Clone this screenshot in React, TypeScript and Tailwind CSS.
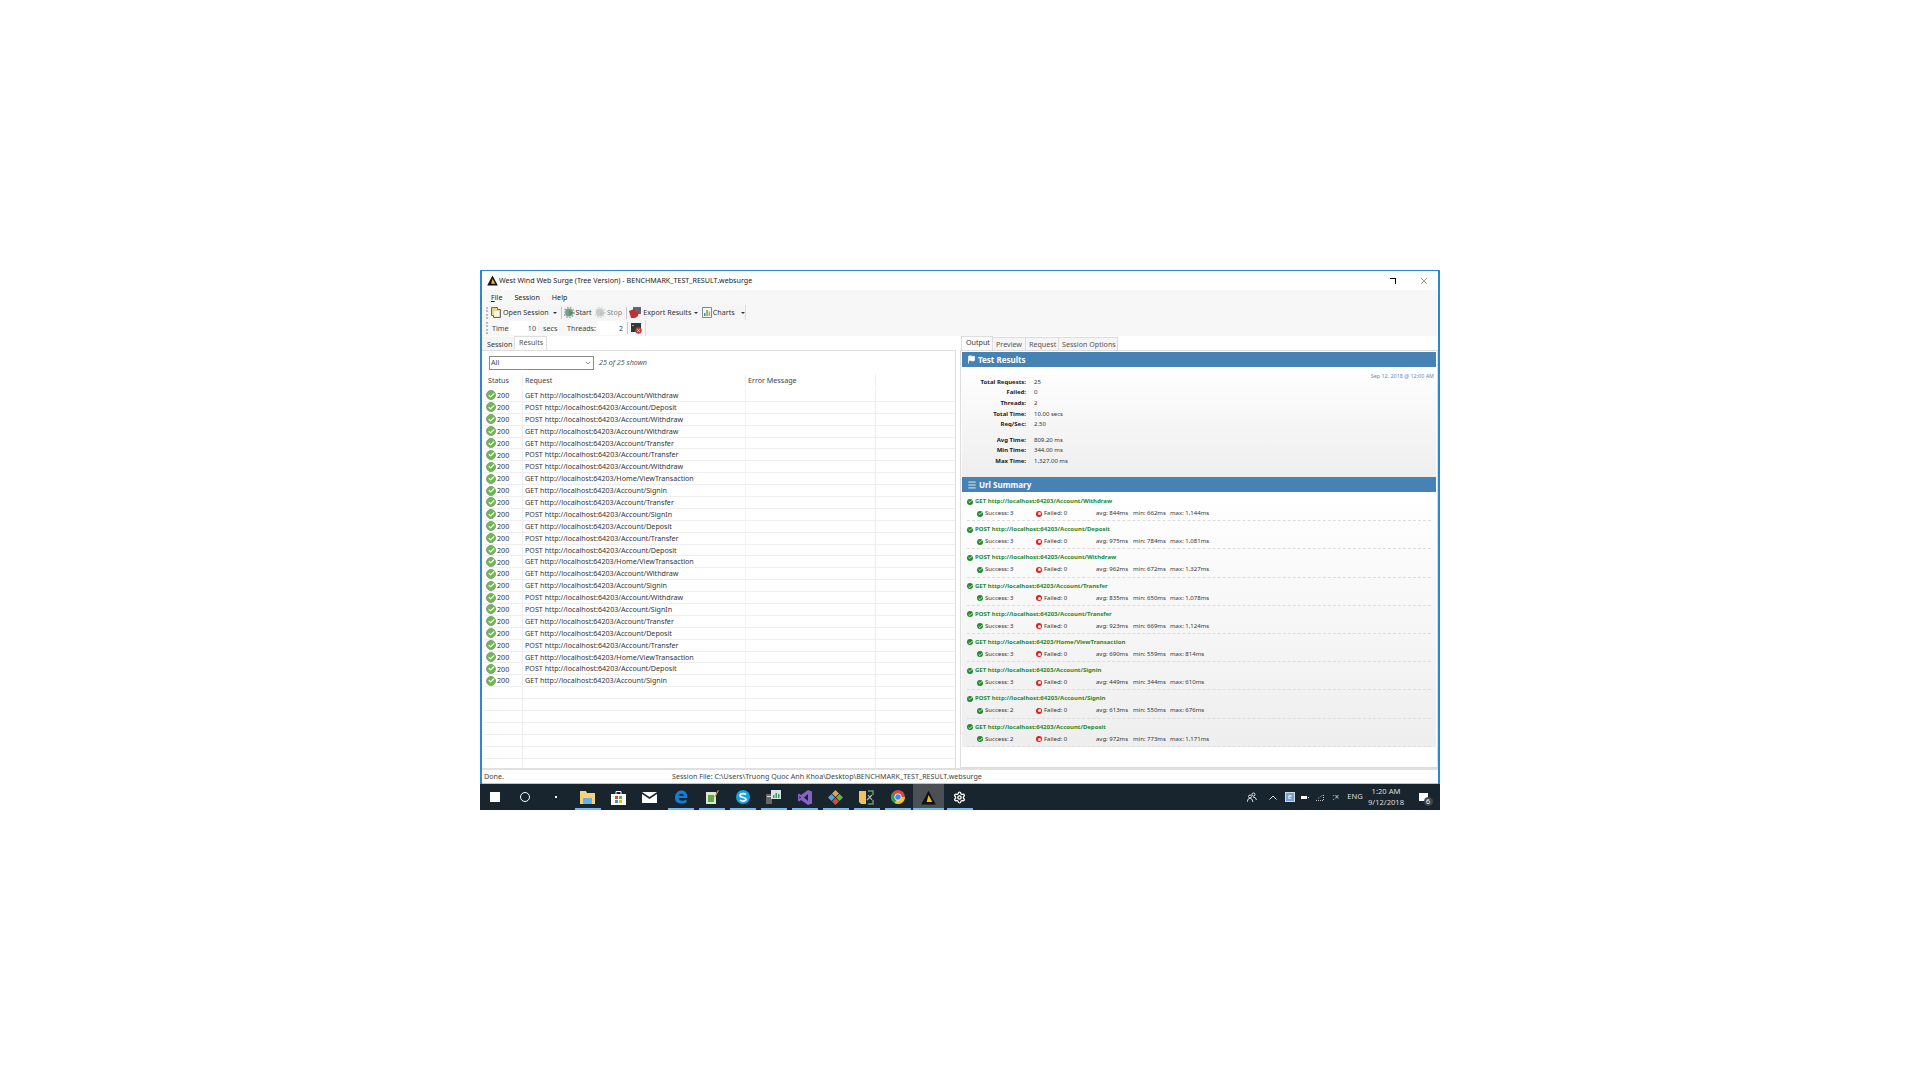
import type { ReactNode } from 'react';
import { Check, X, ChevronDown, Settings, Flag, Menu } from 'lucide-react';

const requests = [
    'GET http://localhost:64203/Account/Withdraw',
    'POST http://localhost:64203/Account/Deposit',
    'POST http://localhost:64203/Account/Withdraw',
    'GET http://localhost:64203/Account/Withdraw',
    'GET http://localhost:64203/Account/Transfer',
    'POST http://localhost:64203/Account/Transfer',
    'POST http://localhost:64203/Account/Withdraw',
    'GET http://localhost:64203/Home/ViewTransaction',
    'GET http://localhost:64203/Account/Signin',
    'GET http://localhost:64203/Account/Transfer',
    'POST http://localhost:64203/Account/SignIn',
    'GET http://localhost:64203/Account/Deposit',
    'POST http://localhost:64203/Account/Transfer',
    'POST http://localhost:64203/Account/Deposit',
    'GET http://localhost:64203/Home/ViewTransaction',
    'GET http://localhost:64203/Account/Withdraw',
    'GET http://localhost:64203/Account/Signin',
    'POST http://localhost:64203/Account/Withdraw',
    'POST http://localhost:64203/Account/SignIn',
    'GET http://localhost:64203/Account/Transfer',
    'GET http://localhost:64203/Account/Deposit',
    'POST http://localhost:64203/Account/Transfer',
    'GET http://localhost:64203/Home/ViewTransaction',
    'POST http://localhost:64203/Account/Deposit',
    'GET http://localhost:64203/Account/Signin',
];

const urls = [
    { url: 'GET http://localhost:64203/Account/Withdraw', ok: 3, avg: 844, min: 662, max: '1,144' },
    { url: 'POST http://localhost:64203/Account/Deposit', ok: 3, avg: 975, min: 784, max: '1,081' },
    { url: 'POST http://localhost:64203/Account/Withdraw', ok: 3, avg: 962, min: 672, max: '1,327' },
    { url: 'GET http://localhost:64203/Account/Transfer', ok: 3, avg: 835, min: 650, max: '1,078' },
    { url: 'POST http://localhost:64203/Account/Transfer', ok: 3, avg: 923, min: 669, max: '1,124' },
    { url: 'GET http://localhost:64203/Home/ViewTransaction', ok: 3, avg: 690, min: 559, max: '814' },
    { url: 'GET http://localhost:64203/Account/Signin', ok: 3, avg: 449, min: 344, max: '610' },
    { url: 'POST http://localhost:64203/Account/Signin', ok: 2, avg: 613, min: 550, max: '676' },
    { url: 'GET http://localhost:64203/Account/Deposit', ok: 2, avg: 972, min: 773, max: '1,171' },
];

const stats = [
    ['Total Requests:', '25'],
    ['Failed:', '0'],
    ['Threads:', '2'],
    ['Total Time:', '10.00 secs'],
    ['Req/Sec:', '2.50'],
];

const times = [
    ['Avg Time:', '809.20 ms'],
    ['Min Time:', '344.00 ms'],
    ['Max Time:', '1,327.00 ms'],
];

function Logo({ size = 11 }: { size?: number }) {
    return (
        <svg width={size} height={size} viewBox="0 0 12 12">
            <path d="M6 .5 11.800 11.500H.2Z" fill="#111" />
            <path d="M6 4 9 9.500H4.500Z" fill="#f2c200" />
        </svg>
    );
}

function RowCheck() {
    return (
        <span className="w-[10px] h-[10px] rounded-full bg-[#6dbb4a] border border-[#8a9a86] flex items-center justify-center shrink-0">
            <Check size={7} strokeWidth={4} color="#fff" />
        </span>
    );
}

function SmallCheck() {
    return (
        <span className="w-[6px] h-[6px] rounded-full bg-[#1f8a2e] flex items-center justify-center shrink-0">
            <Check size={5} strokeWidth={4} color="#fff" />
        </span>
    );
}

function SmallFail() {
    return (
        <span className="w-[6px] h-[6px] rounded-full bg-[#f01a1a] flex items-center justify-center shrink-0">
            <span className="w-[3px] h-[3px] bg-white rounded-full" />
        </span>
    );
}

function Grip() {
    return <span className="w-[2px] h-[12px] border-l-2 border-dotted border-[#bdbdbd] shrink-0" />;
}

function Caret() {
    return <span className="w-0 h-0 border-x-[2px] border-x-transparent border-t-[2px] border-t-[#333] shrink-0" />;
}

function Sep() {
    return <span className="block w-px h-[12px] bg-[#c8c8c8] shrink-0" />;
}

function OpenIcon() {
    return (
        <svg width="10" height="11" viewBox="0 0 10 11">
            <path d="M.5.5h6v2h3v8h-7v-2h-2Z" fill="#e9d48a" stroke="#6e6a55" />
            <path d="M3 4h5v5.500H3Z" fill="#f7f7f2" />
        </svg>
    );
}

function GearIcon({ grey }: { grey?: boolean }) {
    return (
        <svg width="11" height="11" viewBox="0 0 11 11">
            <circle cx="5" cy="5.500" r="4" fill={grey ? '#c9cdcb' : '#7f9a94'} />
            <circle cx="5" cy="5.500" r="5" fill="none" stroke={grey ? '#d5d8d6' : '#8ba39e'} strokeWidth="1.400" strokeDasharray="1.500 1.500" />
            <path d="M5 3.500l5 2.500-5 2.500Z" fill={grey ? '#c0c4c2' : '#3fa34a'} />
        </svg>
    );
}

function ExportIcon() {
    return (
        <svg width="12" height="11" viewBox="0 0 12 11">
            <path d="M4 0h8v7H4Z" fill="#63676b" />
            <path d="M0 4l5-2 2 3 3-1-1 5-3 2H2Z" fill="#bf2f34" />
        </svg>
    );
}

function ChartsIcon() {
    return (
        <svg width="10" height="11" viewBox="0 0 10 11">
            <path d="M.5.5h9v10h-9Z" fill="#f2f6f8" stroke="#7b8d99" />
            <path d="M2 6h1.500v3H2Z" fill="#3f8fca" />
            <path d="M4.300 3h1.500v6H4.300Z" fill="#6cab4a" />
            <path d="M6.600 4.500h1.500V9H6.600Z" fill="#e0a43c" />
        </svg>
    );
}

function ConsoleIcon() {
    return (
        <svg width="11" height="11" viewBox="0 0 11 11">
            <path d="M0 0h10v9H0Z" fill="#2e3a36" />
            <path d="M1 2h2v1H1Z" fill="#6fd06f" />
            <circle cx="7.500" cy="7.500" r="3.200" fill="#dc3430" />
            <path d="M6.300 6.300l2.400 2.400m0-2.400L6.300 8.700" stroke="#fff" strokeWidth=".8" />
        </svg>
    );
}

function TitleBar() {
    return (
        <div className="h-[19px] shrink-0 bg-white flex items-center pl-[5px] pr-[9px] text-[#222]">
            <Logo />
            <span className="ml-[1px]">West Wind Web Surge (Tree Version) - BENCHMARK_TEST_RESULT.websurge</span>
            <span className="ml-auto w-[6px] h-[6px] border-t border-r border-black mr-[23px]" />
            <X size={10} strokeWidth={1} color="#111" />
        </div>
    );
}

function Toolbars() {
    return (
        <div className="h-[46px] shrink-0 bg-[#f7f7f7] flex flex-col whitespace-nowrap">
            <div className="h-[15px] flex items-center gap-[12px] pl-[9px] text-[#222]">
                <span><span className="underline">F</span>ile</span>
                <span>Session</span>
                <span>Help</span>
            </div>
            <div className="h-[15px] flex items-center pl-[4px] w-[264px] bg-[#f5f5f5] border-r border-[#ddd] text-[#333]">
                <Grip />
                <span className="ml-[3px] flex"><OpenIcon /></span>
                <span className="ml-[2px] w-[51px]">Open Session</span>
                <Caret />
                <span className="ml-[4px]"><Sep /></span>
                <span className="ml-[2px] flex"><GearIcon /></span>
                <span className="ml-[1px] w-[20px]">Start</span>
                <span className="flex"><GearIcon grey /></span>
                <span className="ml-[1px] w-[20px] text-[#888]">Stop</span>
                <Sep />
                <span className="ml-[2px] flex"><ExportIcon /></span>
                <span className="ml-[2px] w-[52px]">Export Results</span>
                <Caret />
                <span className="ml-[4px] flex"><ChartsIcon /></span>
                <span className="ml-[1px] w-[29px]">Charts</span>
                <Caret />
            </div>
            <div className="h-[16px] flex items-center pl-[4px] w-[164px] border-r border-[#ddd] text-[#444]">
                <Grip />
                <span className="ml-[4px] w-[17px]">Time:</span>
                <span className="w-[29px] h-[14px] bg-white text-right leading-[14px] pr-[2px]">10</span>
                <span className="ml-[5px] w-[24px]">secs</span>
                <span className="w-[30px]">Threads:</span>
                <span className="w-[28px] h-[14px] bg-white text-right leading-[14px] pr-[2px]">2</span>
                <span className="ml-[2px]"><Sep /></span>
                <span className="ml-[3px] flex"><ConsoleIcon /></span>
            </div>
        </div>
    );
}

function ResultsPane() {
    const blanks = Array.from({ length: 7 });
    return (
        <div className="w-[474px] shrink-0 flex flex-col min-h-0 overflow-hidden">
            <div className="h-[14px] shrink-0 flex items-end whitespace-nowrap">
                <span className="w-[32px] h-[13px] pl-[5px] bg-[#f5f5f5] text-[#333] leading-[14px]">Session</span>
                <span className="w-[33px] h-[14px] pl-[4px] bg-white border-x border-t border-[#ddd] text-[#555] leading-[11px]">Results</span>
            </div>
            <div className="flex-1 min-h-0 overflow-hidden border-t border-[#ddd] border-r flex flex-col">
                <div className="h-[23px] shrink-0 flex items-center pl-[7px]">
                    <div className="w-[105px] h-[14px] border border-[#8a8a8a] flex items-center justify-between px-[1px]">
                        <span className="text-[#444]">All</span>
                        <ChevronDown size={8} color="#555" />
                    </div>
                    <span className="ml-[5px] italic text-[#555]">25 of 25 shown</span>
                </div>
                <div className="h-[16px] pb-[3px] shrink-0 flex items-center text-[#444] ml-[2px]">
                    <span className="w-[38px] pl-[4px]">Status</span>
                    <span className="w-[223px] pl-[2px] border-l border-[#eee]">Request</span>
                    <span className="w-[130px] pl-[2px] border-l border-[#eee]">Error Message</span>
                    <span className="flex-1 h-full border-l border-[#eee]" />
                </div>
                {requests.map((r, i) => (
                    <div key={i} className="h-[11.900px] shrink-0 flex items-center ml-[2px] border-b border-[#eeeeee] text-[#333]">
                        <span className="w-[38px] pl-[2px] flex items-center gap-[1px]"><RowCheck />200</span>
                        <span className="w-[223px] h-full pl-[2px] border-l border-[#eee] leading-[11px]">{r}</span>
                        <span className="w-[130px] h-full border-l border-[#f3f3f3]" />
                        <span className="flex-1 h-full border-l border-[#eee]" />
                    </div>
                ))}
                {blanks.map((_, i) => (
                    <div key={i} className="h-[11.900px] shrink-0 flex ml-[2px] border-b border-[#eeeeee]">
                        <span className="w-[38px]" />
                        <span className="w-[223px] h-full border-l border-[#eee]" />
                        <span className="w-[130px] h-full border-l border-[#f3f3f3]" />
                        <span className="flex-1 h-full border-l border-[#eee]" />
                    </div>
                ))}
            </div>
        </div>
    );
}

function SectionHead({ icon, title }: { icon: ReactNode; title: string }) {
    return (
        <div className="h-[15px] shrink-0 bg-[#4682b4] flex items-center pl-[5px] gap-[2px] text-white text-[8px] font-bold">
            {icon}
            {title}
        </div>
    );
}

function StatRow({ label, value }: { label: string; value: string }) {
    return (
        <div className="h-[10.600px] flex items-center">
            <span className="w-[64px] text-right font-bold text-[#222]">{label}</span>
            <span className="ml-[8px]">{value}</span>
        </div>
    );
}

function OutputPane() {
    return (
        <div className="flex-1 min-w-0 min-h-0 flex flex-col ml-[4px]">
            <div className="h-[14px] shrink-0 flex items-end pl-[1px] whitespace-nowrap">
                <span className="w-[32px] h-[14px] pl-[4px] bg-white border-x border-t border-[#ddd] text-[#333] leading-[11px]">Output</span>
                <span className="w-[33px] h-[13px] pl-[3px] bg-[#f5f5f5] border-r border-t border-[#ddd] text-[#555] leading-[13px]">Preview</span>
                <span className="w-[33px] h-[13px] pl-[3px] bg-[#f5f5f5] border-r border-t border-[#ddd] text-[#555] leading-[13px]">Request</span>
                <span className="w-[59px] h-[13px] pl-[3px] bg-[#f5f5f5] border-r border-t border-[#ddd] text-[#555] leading-[13px]">Session Options</span>
            </div>
            <div className="flex-1 min-h-0 border border-[#ddd] pt-px px-px flex flex-col">
                <SectionHead icon={<Flag size={9} strokeWidth={2} color="#fff" fill="#fff" />} title="Test Results" />
                <div className="h-[110px] shrink-0 bg-gradient-to-b from-white to-[#eeeeee] relative pt-[10px] text-[6px] text-[#333]">
                    <span className="absolute right-[2px] top-[5px] text-[5.400px] text-[#5b8db8]">Sep 12, 2018 @ 12:00 AM</span>
                    {stats.map(([k, v]) => <StatRow key={k} label={k} value={v} />)}
                    <div className="h-[5px]" />
                    {times.map(([k, v]) => <StatRow key={k} label={k} value={v} />)}
                </div>
                <SectionHead icon={<Menu size={10} strokeWidth={2} color="#fff" />} title="Url Summary" />
                <div className="shrink-0 bg-gradient-to-b from-white to-[#eeeeee] pt-[1px] text-[6px]">
                    {urls.map(u => (
                        <div key={u.url} className="h-[28.200px] mx-[5px] border-b border-dashed border-[#dddddd] pt-[4px]">
                            <div className="h-[9px] flex items-center gap-[2px] font-bold text-[#1e8a2e]">
                                <SmallCheck />
                                {u.url}
                            </div>
                            <div className="flex items-center mt-[3px] h-[9px] text-[#333] pl-[10px]">
                                <span className="w-[59px] flex items-center gap-[2px]"><SmallCheck />Success: {u.ok}</span>
                                <span className="w-[60px] flex items-center gap-[2px]"><SmallFail />Failed: 0</span>
                                <span className="w-[37px]">avg: {u.avg}ms</span>
                                <span className="w-[37px]">min: {u.min}ms</span>
                                <span>max: {u.max}ms</span>
                            </div>
                        </div>
                    ))}
                </div>
            </div>
        </div>
    );
}

function TaskIcon({ children, active, running = true }: { children: ReactNode; active?: boolean; running?: boolean }) {
    return (
        <div className={active ? 'w-[31px] h-full flex items-center justify-center relative bg-[#4a5056]' : 'w-[31px] h-full flex items-center justify-center relative'}>
            {children}
            {running && <span className={active ? 'absolute bottom-0 left-0 right-0 h-[2px] bg-[#76b9ed]' : 'absolute bottom-0 left-[2.500px] right-[2.500px] h-[2px] bg-[#76b9ed]'} />}
        </div>
    );
}

function Taskbar() {
    return (
        <div className="h-[26px] shrink-0 bg-[#18252f] flex items-center text-white">
            <div className="w-[30px] flex justify-center">
                <span className="w-[10px] h-[10px] bg-white" />
            </div>
            <div className="w-[30px] flex justify-center">
                <span className="w-[10px] h-[10px] rounded-full border-[1.500px] border-white" />
            </div>
            <div className="w-[32px] flex justify-center">
                <span className="w-[2px] h-[2px] bg-white" />
            </div>
            <div className="flex h-full">
                <TaskIcon>
                    <svg width="15" height="14" viewBox="0 0 15 14"><path d="M0 1h6l1 2h8v11H0Z" fill="#f6d37a" /><path d="M3 8h9v6H3Z" fill="#5fb3ec" /></svg>
                </TaskIcon>
                <TaskIcon running={false}>
                    <svg width="15" height="15" viewBox="0 0 15 15"><path d="M5 4V1.500h5V4" fill="none" stroke="#fff" /><path d="M0 4h15v11H0Z" fill="#fff" /><path d="M4 6h3v3H4Z" fill="#e8452c" /><path d="M8 6h3v3H8Z" fill="#6fb52c" /><path d="M4 10h3v3H4Z" fill="#2a9fe0" /><path d="M8 10h3v3H8Z" fill="#f5b800" /></svg>
                </TaskIcon>
                <TaskIcon running={false}>
                    <svg width="15" height="11" viewBox="0 0 15 11"><path d="M0 0h15v11H0Z" fill="#fff" /><path d="M0 0l7.500 5 7.500-5v2L7.500 7 0 2Z" fill="#18252f" /></svg>
                </TaskIcon>
                <TaskIcon>
                    <svg width="14" height="14" viewBox="0 0 14 14"><path d="M1 8C1 3 4 .5 7.500.5 11 .5 13.500 3 13.500 8H4.500c.2 3 4.500 3.500 8 1.500v3C8 14.500 1 14 1 8Zm3.700-2.300h5.500C10 3 5 3 4.700 5.700Z" fill="#0f7fd8" /></svg>
                </TaskIcon>
                <TaskIcon>
                    <svg width="14" height="14" viewBox="0 0 14 14"><path d="M1 2h10v12H1Z" fill="#dfe8d0" /><path d="M3 5h6v7H3Z" fill="#63a945" /><path d="M9 7l4-7 1 .5-4 7Z" fill="#c9a23a" /></svg>
                </TaskIcon>
                <TaskIcon>
                    <svg width="14" height="14" viewBox="0 0 14 14"><circle cx="7" cy="7" r="7" fill="#12a5e4" /><path d="M10 4.500C8.500 3 4 3.200 4 5.500c0 2.500 6 1.500 6 3.800 0 2.200-4.500 2.200-6 .7" fill="none" stroke="#fff" strokeWidth="1.700" /></svg>
                </TaskIcon>
                <TaskIcon>
                    <svg width="15" height="14" viewBox="0 0 15 14"><path d="M0 4h6v10H0Z" fill="#666" /><path d="M5 0h10v9H5Z" fill="#d8e4e8" /><path d="M7 5h1.500v3H7Zm2.500-2H11v5H9.500Zm2.500 1h1.500v4H12Z" fill="#3f9a63" /><path d="M1 6h4v1H1Z" fill="#ddd" /></svg>
                </TaskIcon>
                <TaskIcon>
                    <svg width="14" height="15" viewBox="0 0 14 15"><path d="M10 0l4 1.500v12L10 15 3 10l-2 1.500L0 10.500v-6L1 3.500 3 5Zm0 4L6 7.500 10 11ZM1.500 6v3L3 7.500Z" fill="#8661c5" fillRule="evenodd" /></svg>
                </TaskIcon>
                <TaskIcon>
                    <svg width="15" height="15" viewBox="0 0 15 15"><path d="M7.500 0l3.500 3.500-3.500 3.500L4 3.500Z" fill="#e8a33c" /><path d="M3.500 4 7 7.500 3.500 11 0 7.500Z" fill="#5aa0e0" /><path d="M11.500 4 15 7.500 11.500 11 8 7.500Z" fill="#6fb52c" /><path d="M7.500 8 11 11.500 7.500 15 4 11.500Z" fill="#d84a3a" /></svg>
                </TaskIcon>
                <TaskIcon>
                    <svg width="15" height="15" viewBox="0 0 15 15"><path d="M0 1h7v13H2l-2-2Z" fill="#eec25c" /><path d="M9 1h5v4M9 14h5v-4" fill="none" stroke="#5f9a6a" strokeWidth="1.500" /><path d="M8 10l5-5M9 5l4 5" stroke="#b8b8b8" strokeWidth="1.200" /></svg>
                </TaskIcon>
                <TaskIcon>
                    <svg width="14" height="14" viewBox="0 0 14 14"><circle cx="7" cy="7" r="7" fill="#e0463a" /><path d="M7 7 14 7A7 7 0 0 1 3.500 13Z" fill="#f5c518" /><path d="M7 7 3.500 13A7 7 0 0 1 .9 3.500Z" fill="#2e9e4f" /><circle cx="7" cy="7" r="3.300" fill="#4285f4" stroke="#fff" strokeWidth=".8" /></svg>
                </TaskIcon>
                <TaskIcon active><Logo size={15} /></TaskIcon>
                <TaskIcon><Settings size={13} strokeWidth={2.500} color="#fff" /></TaskIcon>
            </div>
            <div className="ml-auto flex items-center text-[7.600px] text-[#ddd]">
                <span className="w-[23.500px] flex justify-center">
                    <svg width="10" height="10" viewBox="0 0 10 10" fill="none" stroke="#ddd"><circle cx="6.500" cy="2.500" r="1.500" /><circle cx="3" cy="4.500" r="1.500" /><path d="M0 10q1-4 3-4t3 4M6 5q3 0 3.500 3" /></svg>
                </span>
                <span className="w-[19px] flex justify-center">
                    <svg width="8" height="5" viewBox="0 0 8 5" fill="none" stroke="#ddd"><path d="M.5 4.500 4 1l3.500 3.500" /></svg>
                </span>
                <span className="w-[14.500px] flex justify-center">
                    <span className="w-[10px] h-[10px] bg-[#7c9fd8] border border-[#cdd] text-[7px] leading-[8px] text-center text-white">e</span>
                </span>
                <span className="w-[15px] flex justify-center items-center gap-[1px]">
                    <span className="w-[6px] h-[3px] bg-white" />
                    <span className="w-px h-px bg-white" />
                </span>
                <span className="w-[15.500px] flex justify-center">
                    <svg width="8" height="7" viewBox="0 0 8 7" fill="none" stroke="#bbb" strokeDasharray="1 1"><path d="M0 6.500h8M2 4.500Q5 2 7.500 1M7.500 1v5" /></svg>
                </span>
                <span className="w-[16.500px] flex justify-center text-[8px] text-[#ccc]">:×</span>
                <span className="w-[22px] text-center">ENG</span>
                <div className="w-[40px] flex flex-col items-center leading-[11px]">
                    <span>1:20 AM</span>
                    <span>9/12/2018</span>
                </div>
                <span className="w-[34px] flex justify-center">
                    <span className="relative w-[9px] h-[8px] bg-white">
                        <span className="absolute -right-[5px] -bottom-[5px] w-[9px] h-[9px] rounded-full bg-[#444] text-white text-[7px] leading-[9px] text-center">6</span>
                    </span>
                </span>
            </div>
        </div>
    );
}

export default function App() {
    return (
        <div className="min-h-screen bg-white pl-[480px] pt-[270px] text-[7.150px] font-['Noto_Sans',sans-serif]">
            <div className="w-[960px] flex flex-col">
                <div className="h-[514px] shrink-0 border-x-2 border-t border-[#2e86cf] flex flex-col bg-white">
                    <TitleBar />
                    <Toolbars />
                    <div className="flex-1 min-h-0 flex">
                        <ResultsPane />
                        <OutputPane />
                    </div>
                    <div className="h-[16px] shrink-0 border-t-2 border-b border-t-[#e0e0e0] border-b-[#c4c4c4] flex items-center pl-[2px] text-[#444]">
                        <span className="w-[188px]">Done.</span>
                        <span>Session File: C:\Users\Truong Quoc Anh Khoa\Desktop\BENCHMARK_TEST_RESULT.websurge</span>
                    </div>
                </div>
                <Taskbar />
            </div>
        </div>
    );
}
